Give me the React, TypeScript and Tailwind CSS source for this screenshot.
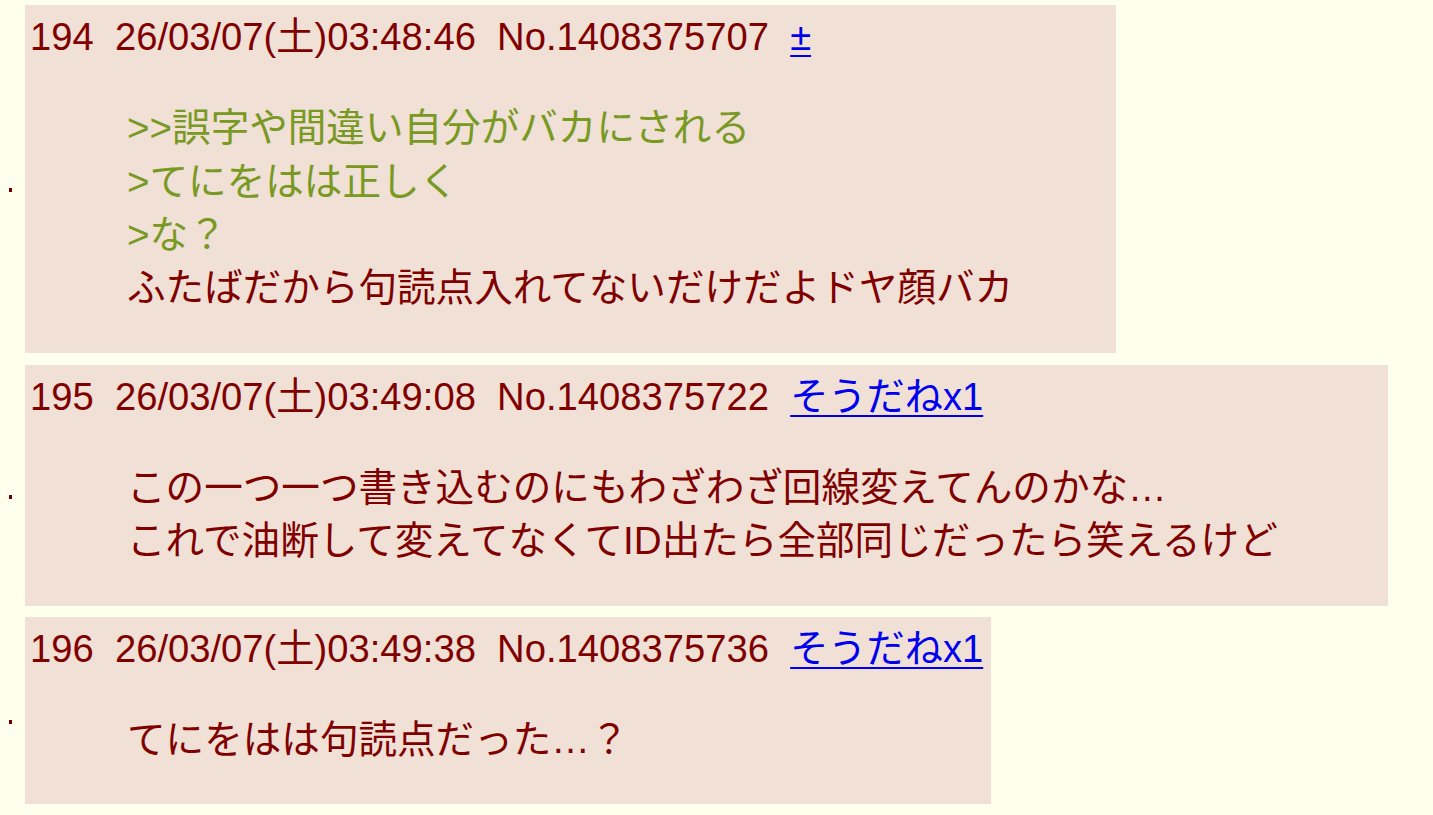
import React from "react";

const FONT = { fontFamily: '"Liberation Sans", "Noto Sans CJK JP", sans-serif' };

type Line = { text: string; quote?: boolean };
type Post = {
  no: string;
  date: string;
  id: string;
  link: string;
  lines: Line[];
  width: string;
  mt: string;
};

const posts: Post[] = [
  {
    no: "194",
    date: "26/03/07(土)03:48:46",
    id: "No.1408375707",
    link: "±",
    width: "w-[1091px]",
    mt: "mt-[5px]",
    lines: [
      { text: ">>誤字や間違い自分がバカにされる", quote: true },
      { text: ">てにをはは正しく", quote: true },
      { text: ">な？", quote: true },
      { text: "ふたばだから句読点入れてないだけだよドヤ顔バカ" },
    ],
  },
  {
    no: "195",
    date: "26/03/07(土)03:49:08",
    id: "No.1408375722",
    link: "そうだねx1",
    width: "w-[1363px]",
    mt: "mt-[12px]",
    lines: [
      { text: "この一つ一つ書き込むのにもわざわざ回線変えてんのかな…" },
      { text: "これで油断して変えてなくてID出たら全部同じだったら笑えるけど" },
    ],
  },
  {
    no: "196",
    date: "26/03/07(土)03:49:38",
    id: "No.1408375736",
    link: "そうだねx1",
    width: "w-[966px]",
    mt: "mt-[11px]",
    lines: [{ text: "てにをはは句読点だった…？" }],
  },
];

function PostRow({ p }: { p: Post }) {
  return (
    <div className={`flex ${p.mt}`}>
      <div className="w-[25px] shrink-0 flex items-center">
        <span className="block w-[3px] h-[4px] bg-[#700000] ml-[9px] mt-[23px]" />
      </div>
      <div className={`${p.width} shrink-0 bg-[#f0e0d6] pt-[5px] pl-[5px] text-[#800000] text-[38.6px] leading-[53.33px]`}>
        <div className="whitespace-pre text-[38.2px]">
          {p.no}
          {"\u00a0\u00a0"}
          {p.date}
          {"\u00a0\u00a0"}
          {p.id}
          {"\u00a0\u00a0"}
          <a href="#" className="text-[#0000ee] underline underline-offset-[5px] decoration-[2px]">
            {p.link}
          </a>
        </div>
        <div className="mt-[38px] mb-[38px] ml-[97px] mr-[96px]">
          {p.lines.map((l, i) => (
            <div key={i} className={`whitespace-nowrap ${l.quote ? "text-[#789922]" : ""}`}>
              {l.text}
            </div>
          ))}
        </div>
      </div>
    </div>
  );
}

export default function App() {
  return (
    <div className="w-[1433px] h-[815px] bg-[#ffffee] overflow-hidden" style={FONT}>
      {posts.map((p) => (
        <PostRow key={p.no} p={p} />
      ))}
    </div>
  );
}
